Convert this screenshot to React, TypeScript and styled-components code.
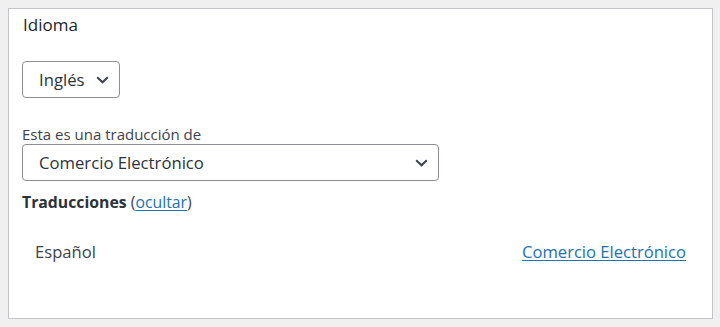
import React from 'react';
import styled, { createGlobalStyle } from 'styled-components';

const GlobalStyle = createGlobalStyle`
  html, body {
    margin: 0;
    background: #f0f0f1;
  }
  body {
    padding: 8px;
    font-family: "Open Sans", "Noto Sans", "Liberation Sans", sans-serif;
    color: #3c434a;
  }
`;

function Chevron (): React.ReactElement {
  return (
    <svg width='13' height='8' viewBox='0 0 13 8' fill='none'>
      <path d='M1.2 1.2 6.5 6.3l5.3-5.1' stroke='#3c434a' strokeWidth='2' />
    </svg>
  );
}

export default function App (): React.ReactElement {
  return (
    <>
      <GlobalStyle />
      <Panel>
        <Heading>Idioma</Heading>
        <Select $width={98} $gap={24}>
          <span>Inglés</span>
          <Chevron />
        </Select>
        <Label>Esta es una traducción de</Label>
        <Select $width={417} $gap={0}>
          <span>Comercio Electrónico</span>
          <Chevron />
        </Select>
        <Title>
          <strong>Traducciones</strong> (<Link href='#'>ocultar</Link>)
        </Title>
        <Table>
          <Row>
            <span>Español</span>
            <Link href='#'>Comercio Electrónico</Link>
          </Row>
        </Table>
      </Panel>
    </>
  );
}

const Panel = styled.div`
  box-sizing: border-box;
  width: 705px;
  height: 311px;
  background: #fff;
  border: 1px solid #c3c4c7;
  padding: 4px 13px 0;
  display: flex;
  flex-direction: column;
  align-items: flex-start;
`;

const Heading = styled.div`
  font-size: 17px;
  line-height: 24px;
  color: #1d2327;
  margin-left: 1px;
`;

const Select = styled.div<{ $width: number, $gap: number }>`
  box-sizing: border-box;
  width: ${p => p.$width}px;
  height: 37px;
  margin-top: ${p => p.$gap}px;
  border: 1px solid #8c8f94;
  border-radius: 4px;
  padding: 0 10px 0 16px;
  display: flex;
  align-items: center;
  justify-content: space-between;
  font-size: 16.7px;
  color: #2c3338;
`;

const Label = styled.div`
  margin-top: 26px;
  font-size: 15px;
  line-height: 20px;
  color: #3c434a;
`;

const Title = styled.div`
  margin-top: 10px;
  font-size: 15.8px;
  line-height: 22px;
  color: #3c434a;

  strong {
    font-weight: 700;
    color: #2c3338;
  }
`;

const Link = styled.a`
  color: #2271b1;
  text-decoration: underline;
  text-decoration-thickness: 1px;
  text-underline-offset: 2px;
`;

const Table = styled.div`
  align-self: stretch;
  margin-top: 21px;
`;

const Row = styled.div`
  display: flex;
  justify-content: space-between;
  padding: 6px 13px 6px 13px;
  font-size: 16.6px;
  line-height: 24px;
`;
